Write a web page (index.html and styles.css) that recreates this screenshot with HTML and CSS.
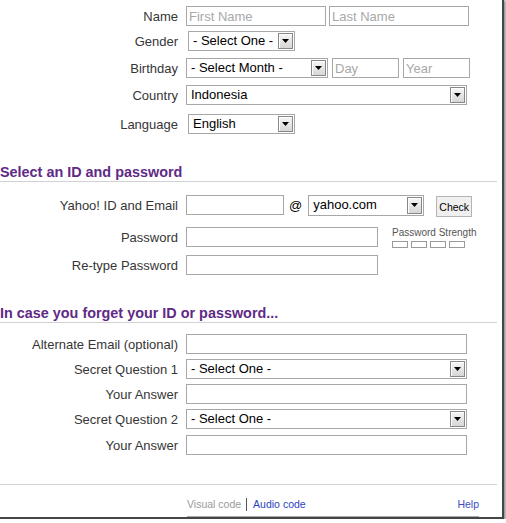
FILE: index.html
```html
<!DOCTYPE html>
<html>
<head>
<meta charset="utf-8">
<title>Sign up</title>
<link rel="stylesheet" href="styles.css">
</head>
<body>
<div class="window">
  <div class="sec">
    <div class="row mt6">
      <span class="lbl">Name</span>
      <input class="inp w140" placeholder="First Name">
      <input class="inp w140 ml3" placeholder="Last Name">
    </div>
    <div class="row mt5">
      <span class="lbl">Gender</span>
      <div class="sel w107 ml2"><span class="v">- Select One -</span><span class="b"><svg width="7" height="4" viewBox="0 0 7 4"><path d="M0 0H7L3.5 4Z" fill="#000"/></svg></span></div>
    </div>
    <div class="row mt7">
      <span class="lbl">Birthday</span>
      <div class="sel w142"><span class="v">- Select Month -</span><span class="b"><svg width="7" height="4" viewBox="0 0 7 4"><path d="M0 0H7L3.5 4Z" fill="#000"/></svg></span></div>
      <input class="inp w67 ml4" placeholder="Day">
      <input class="inp w67 ml4" placeholder="Year">
    </div>
    <div class="row mt7">
      <span class="lbl">Country</span>
      <div class="sel w281"><span class="v">Indonesia</span><span class="b"><svg width="7" height="4" viewBox="0 0 7 4"><path d="M0 0H7L3.5 4Z" fill="#000"/></svg></span></div>
    </div>
    <div class="row mt9">
      <span class="lbl">Language</span>
      <div class="sel w107 ml2"><span class="v">English</span><span class="b"><svg width="7" height="4" viewBox="0 0 7 4"><path d="M0 0H7L3.5 4Z" fill="#000"/></svg></span></div>
    </div>
  </div>

  <h2 class="head">Select an ID and password</h2>
  <div class="sec">
    <div class="row mt13">
      <span class="lbl">Yahoo! ID and Email</span>
      <input class="inp w98">
      <span class="at">@</span>
      <div class="sel w116 h21"><span class="v">yahoo.com</span><span class="b"><svg width="7" height="4" viewBox="0 0 7 4"><path d="M0 0H7L3.5 4Z" fill="#000"/></svg></span></div>
      <button class="btn">Check</button>
    </div>
    <div class="row mt12">
      <span class="lbl">Password</span>
      <input class="inp w192" type="password">
      <div class="strength">
        <div class="st-txt">Password Strength</div>
        <div class="st-bars"><span></span><span></span><span></span><span></span></div>
      </div>
    </div>
    <div class="row mt8">
      <span class="lbl">Re-type Password</span>
      <input class="inp w192" type="password">
    </div>
  </div>

  <h2 class="head">In case you forget your ID or password...</h2>
  <div class="sec">
    <div class="row mt11">
      <span class="lbl">Alternate Email (optional)</span>
      <input class="inp w281">
    </div>
    <div class="row mt5">
      <span class="lbl">Secret Question 1</span>
      <div class="sel w281"><span class="v">- Select One -</span><span class="b"><svg width="7" height="4" viewBox="0 0 7 4"><path d="M0 0H7L3.5 4Z" fill="#000"/></svg></span></div>
    </div>
    <div class="row mt5">
      <span class="lbl">Your Answer</span>
      <input class="inp w281">
    </div>
    <div class="row mt5">
      <span class="lbl">Secret Question 2</span>
      <div class="sel w281"><span class="v">- Select One -</span><span class="b"><svg width="7" height="4" viewBox="0 0 7 4"><path d="M0 0H7L3.5 4Z" fill="#000"/></svg></span></div>
    </div>
    <div class="row mt6">
      <span class="lbl">Your Answer</span>
      <input class="inp w281">
    </div>
  </div>

  <div class="divider"></div>
  <div class="links">
    <span class="vis">Visual code</span>
    <span class="sep"></span>
    <a class="aud" href="#">Audio code</a>
    <a class="help" href="#">Help</a>
  </div>
  <div class="cap"><div class="c1"></div><div class="c2"></div><div class="c3"></div></div>
</div>
</body>
</html>
```

FILE: styles.css
```css
html, body {
  margin: 0;
  padding: 0;
  background: #fff;
}
body {
  font-family: "Liberation Sans", Arial, sans-serif;
  font-size: 13px;
  color: #333;
}
.window {
  width: 502px;
  height: 517px;
  background: #fff;
  border-right: 2px solid #454545;
  border-bottom: 2px solid #454545;
  box-shadow: 1px 1px 3px 1px rgba(0, 0, 0, 0.45);
  overflow: hidden;
}
.row {
  display: flex;
  align-items: center;
  height: 20px;
}
.lbl {
  flex: none;
  width: 178px;
  margin-right: 8px;
  text-align: right;
  white-space: nowrap;
  color: #363636;
}
.inp {
  box-sizing: border-box;
  height: 20px;
  margin: 0;
  padding: 0 2px;
  border: 1px solid #a7a7a7;
  font-family: "Liberation Sans", Arial, sans-serif;
  font-size: 13px;
  color: #000;
  background: #fff;
  outline: none;
}
.inp::placeholder {
  color: #a8a8a8;
}
.sel {
  box-sizing: border-box;
  display: flex;
  height: 20px;
  padding: 1px;
  border: 1px solid #a7a7a7;
  background: #fff;
  color: #000;
}
.sel.h21 {
  height: 21px;
}
.sel .v {
  flex: 1;
  padding-left: 3px;
  line-height: 16px;
  white-space: nowrap;
  overflow: hidden;
}
.sel .b {
  box-sizing: border-box;
  flex: none;
  width: 15px;
  border: 1px solid #888;
  background: linear-gradient(#f6f6f6, #d6d6d6);
  box-shadow: inset 1px 1px 0 #fff;
  display: flex;
  align-items: center;
  justify-content: center;
}
.at {
  margin: 0 6px 0 5px;
  color: #000;
}
.btn {
  box-sizing: border-box;
  align-self: flex-start;
  width: 36px;
  height: 21px;
  margin: 1px 0 0 12px;
  padding: 0;
  border: 1px solid #b4b4b4;
  background: #f0f0f0;
  font-family: "Liberation Sans", Arial, sans-serif;
  font-size: 10.5px;
  color: #000;
}
.strength {
  align-self: flex-start;
  margin-left: 14px;
}
.st-txt {
  font-size: 10px;
  line-height: 12px;
  color: #555;
  white-space: nowrap;
}
.st-bars {
  display: flex;
  gap: 3px;
  margin-top: 2px;
}
.st-bars span {
  box-sizing: border-box;
  width: 16px;
  height: 7px;
  border: 1px solid #9a9a9a;
}
.head {
  width: 497px;
  margin: 30px 0 0;
  padding: 0 0 1px;
  border-bottom: 1px solid #d2d2d2;
  font-size: 14.4px;
  line-height: 16px;
  font-weight: bold;
  color: #5f2a86;
  white-space: nowrap;
}
.divider {
  width: 497px;
  height: 1px;
  margin-top: 29px;
  background: #d2d2d2;
}
.links {
  display: flex;
  align-items: center;
  width: 292px;
  margin: 13px 0 0 187px;
  font-size: 10.5px;
  line-height: 13px;
}
.links a {
  text-decoration: none;
}
.vis {
  color: #9a9a9a;
}
.sep {
  width: 1px;
  height: 13px;
  margin: 0 6px 0 5px;
  background: #555;
}
.aud {
  color: #2b3fbf;
}
.help {
  margin-left: auto;
  color: #3a4dbf;
}
.cap {
  box-sizing: border-box;
  display: flex;
  width: 292px;
  height: 20px;
  margin: 5px 0 0 187px;
  border: 1px solid #a9a9a9;
}
.c1 { width: 75px; }
.c2 { width: 195px; border-left: 1px solid #555; }
.c3 { flex: 1; border-left: 1px solid #555; }
.mt5 { margin-top: 5px; }
.mt6 { margin-top: 6px; }
.mt7 { margin-top: 7px; }
.mt8 { margin-top: 8px; }
.mt9 { margin-top: 9px; }
.mt11 { margin-top: 11px; }
.mt12 { margin-top: 12px; }
.mt13 { margin-top: 13px; }
.ml2 { margin-left: 2px; }
.ml3 { margin-left: 3px; }
.ml4 { margin-left: 4px; }
.w67 { width: 67px; }
.w98 { width: 98px; }
.w107 { width: 107px; }
.w116 { width: 116px; }
.w140 { width: 140px; }
.w142 { width: 142px; }
.w192 { width: 192px; }
.w281 { width: 281px; }
```
